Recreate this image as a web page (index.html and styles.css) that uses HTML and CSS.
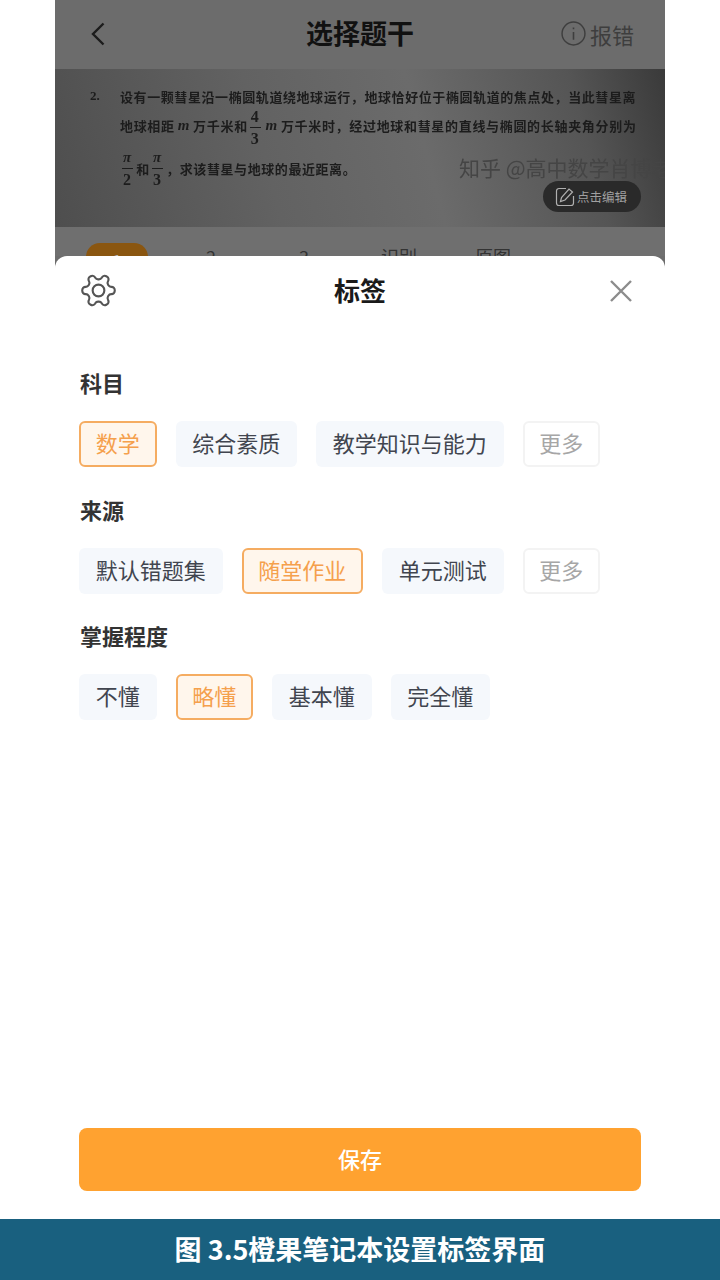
FILE: index.html
```html
<!DOCTYPE html>
<html lang="en">
<head>
    <meta charset="UTF-8">
    <meta name="viewport" content="width=device-width, initial-scale=1.0">
    <title>标签</title>
    <link rel="stylesheet" href="styles.css">
</head>
<body>

    <div class="page">
        <div class="screen">
            <!-- dimmed page behind the sheet -->
            <div class="topbar">
                <svg class="back-icon" viewBox="0 0 14 24" width="14" height="24"><path d="M12.5 1.5 2 12l10.5 10.5" fill="none" stroke="#1c1c1c" stroke-width="2.4"/></svg>
                <div class="topbar-title">选择题干</div>
                <div class="report">
                    <svg viewBox="0 0 24 24" width="25" height="25"><circle cx="12" cy="12" r="11" fill="none" stroke="#3e3e3e" stroke-width="1.4"/><path d="M12 10.5V18M12 6.2v1.8" stroke="#3e3e3e" stroke-width="1.5"/></svg>
                    <span>报错</span>
                </div>
            </div>

            <div class="photo">
                <div class="question">
                    <div class="q-num">2.</div>
                    <div class="q-body">
                        <div class="q-line q-line-1">设有一颗彗星沿一椭圆轨道绕地球运行，地球恰好位于椭圆轨道的焦点处，当此彗星离</div>
                        <div class="q-line q-line-2">地球相距 <i>m</i> 万千米和<span class="frac"><span>4</span><span>3</span></span><i>m</i> 万千米时，经过地球和彗星的直线与椭圆的长轴夹角分别为</div>
                        <div class="q-line q-line-3"><span class="frac"><span><i>π</i></span><span>2</span></span>和<span class="frac"><span><i>π</i></span><span>3</span></span>，求该彗星与地球的最近距离。</div>
                    </div>
                </div>
                <div class="watermark">知乎 @高中数学肖博老师</div>
                <div class="edit-pill">
                    <svg viewBox="0 0 20 20" width="20" height="20"><path d="M11 1.5H4a2.5 2.5 0 0 0-2.5 2.5v12A2.5 2.5 0 0 0 4 18.500h12a2.500 2.500 0 0 0 2.500-2.500V9" fill="none" stroke="#b0b0b0" stroke-width="1.2"/><path d="M5.500 14.500 6.500 10.500 14 2l3.500 3-7.500 8z" fill="none" stroke="#b0b0b0" stroke-width="1.2"/></svg>
                    <span>点击编辑</span>
                </div>
            </div>

            <div class="tabs">
                <div class="tab tab-active">1</div>
                <div class="tab tab-2">2</div>
                <div class="tab tab-3">3</div>
                <div class="tab tab-4">识别</div>
                <div class="tab tab-5">原图</div>
            </div>

            <!-- label sheet -->
            <div class="sheet">
                <div class="sheet-head">
                    <svg class="gear" viewBox="0 0 24 24" width="39" height="39"><g transform="rotate(90 12 12)" fill="none" stroke="#555" stroke-width="1.3"><path d="M12.22 2h-.44a2 2 0 0 0-2 2v.18a2 2 0 0 1-1 1.73l-.43.25a2 2 0 0 1-2 0l-.15-.08a2 2 0 0 0-2.73.73l-.22.38a2 2 0 0 0 .73 2.73l.15.1a2 2 0 0 1 1 1.72v.51a2 2 0 0 1-1 1.74l-.15.09a2 2 0 0 0-.73 2.73l.22.38a2 2 0 0 0 2.73.73l.15-.08a2 2 0 0 1 2 0l.43.25a2 2 0 0 1 1 1.73V20a2 2 0 0 0 2 2h.44a2 2 0 0 0 2-2v-.18a2 2 0 0 1 1-1.73l.43-.25a2 2 0 0 1 2 0l.15.08a2 2 0 0 0 2.73-.73l.22-.39a2 2 0 0 0-.73-2.73l-.15-.08a2 2 0 0 1-1-1.74v-.5a2 2 0 0 1 1-1.74l.15-.09a2 2 0 0 0 .73-2.73l-.22-.38a2 2 0 0 0-2.73-.73l-.15.08a2 2 0 0 1-2 0l-.43-.25a2 2 0 0 1-1-1.73V4a2 2 0 0 0-2-2z"/><circle cx="12" cy="12" r="3.6"/></g></svg>
                    <div class="sheet-title">标签</div>
                    <svg class="close" viewBox="0 0 24 24" width="24" height="24"><path d="M2 2l20 20M22 2 2 22" stroke="#8c8c8c" stroke-width="2.4"/></svg>
                </div>

                <div class="group">
                    <div class="group-title">科目</div>
                    <div class="chips">
                        <div class="chip selected">数学</div>
                        <div class="chip">综合素质</div>
                        <div class="chip">教学知识与能力</div>
                        <div class="chip more">更多</div>
                    </div>
                </div>

                <div class="group">
                    <div class="group-title">来源</div>
                    <div class="chips">
                        <div class="chip">默认错题集</div>
                        <div class="chip selected">随堂作业</div>
                        <div class="chip">单元测试</div>
                        <div class="chip more">更多</div>
                    </div>
                </div>

                <div class="group">
                    <div class="group-title">掌握程度</div>
                    <div class="chips">
                        <div class="chip">不懂</div>
                        <div class="chip selected">略懂</div>
                        <div class="chip">基本懂</div>
                        <div class="chip">完全懂</div>
                    </div>
                </div>

                <button class="save-btn">保存</button>
            </div>
        </div>

        <div class="caption">图 3.5橙果笔记本设置标签界面</div>
    </div>

</body>
</html>
```

FILE: styles.css
```css
body {
    margin: 0;
    background-color: white;
    font-family: "Noto Sans CJK SC", "Noto Sans", sans-serif;
}
.page {
    width: 720px;
    height: 1280px;
    display: flex;
    flex-direction: column;
    overflow: hidden;
}
.screen {
    flex: 1;
    min-height: 0;
    margin: 0 55px;
    display: flex;
    flex-direction: column;
    background-color: #6c6c6c;
}

/* top bar */
.topbar {
    height: 69px;
    flex: none;
    display: flex;
    align-items: center;
    position: relative;
    padding: 0 31px 2px 36px;
    box-sizing: border-box;
}
.topbar-title {
    position: absolute;
    left: 0;
    right: 0;
    top: 13px;
    text-align: center;
    font-size: 27px;
    line-height: 40px;
    font-weight: 700;
    color: #111;
}
.report {
    margin-left: auto;
    display: flex;
    align-items: center;
    gap: 4px;
    font-size: 22px;
    color: #3e3e3e;
}

/* blurred question photo */
.photo {
    height: 158px;
    flex: none;
    position: relative;
    overflow: hidden;
    background: linear-gradient(75deg, #4e4e4e 0%, #626262 35%, #6b6b6b 60%, #555 85%, #3a3a3a 100%);
}
.question {
    display: flex;
    padding: 15px 0 0 35px;
    font-weight: 700;
    font-size: 13px;
    color: #1c1c1c;
    filter: blur(0.5px);
}
.q-num {
    width: 30px;
    line-height: 24px;
    font-family: "Liberation Serif", serif;
}
.q-line {
    display: flex;
    align-items: center;
    white-space: nowrap;
    letter-spacing: 0.58px;
}
.q-line i {
    font-family: "Liberation Serif", serif;
    font-size: 15px;
    margin: 0 3px;
}
.q-line-1 {
    height: 24px;
}
.q-line-2 {
    height: 40px;
    margin-top: -3px;
    letter-spacing: 0.68px;
}
.q-line-2 .frac {
    margin-top: 4px;
}
.q-line-3 {
    height: 40px;
    margin-top: 3px;
}
.q-line-3 .frac {
    margin: 0 3.5px 0 2px;
}
.frac {
    display: inline-flex;
    flex-direction: column;
    align-items: center;
    margin: 0 2px;
    font-family: "Liberation Serif", serif;
    font-size: 16px;
    line-height: 21px;
}
.frac span:first-child {
    border-bottom: 1px solid #1c1c1c;
    padding: 0 1px;
}
.frac i {
    margin: 0;
}
.watermark {
    position: absolute;
    left: 404px;
    top: 83px;
    white-space: nowrap;
    font-size: 21px;
    line-height: 30px;
    color: #454545;
    filter: blur(0.5px);
}
.edit-pill {
    position: absolute;
    left: 488px;
    top: 112px;
    width: 98px;
    height: 31px;
    box-sizing: border-box;
    padding-left: 12px;
    display: flex;
    align-items: center;
    gap: 2px;
    border-radius: 16px;
    background-color: #2a2a2a;
    color: #a0a0a0;
    font-size: 12.5px;
}

/* tabs, mostly hidden by the sheet */
.tabs {
    height: 29px;
    flex: none;
    overflow: hidden;
    display: flex;
    align-items: flex-start;
    background-color: #6f6f6f;
    color: #333;
    font-size: 18px;
    line-height: 24px;
}
.tab {
    flex: none;
    width: 36px;
    margin-top: 17px;
    text-align: center;
}
.tab-active {
    width: 62px;
    height: 34px;
    margin-top: 16px;
    margin-left: 31px;
    border-radius: 14px;
    line-height: 34px;
    background-color: #8a5610;
    color: #bbb;
}
.tab-2 {
    margin-left: 45px;
}
.tab-3 {
    margin-left: 57px;
}
.tab-4 {
    margin-left: 59px;
}
.tab-5 {
    margin-left: 58px;
}

/* sheet */
.sheet {
    flex: 1;
    min-height: 0;
    display: flex;
    flex-direction: column;
    padding: 0 24px 28px 24px;
    border-radius: 12px 12px 0 0;
    background-color: white;
}
.sheet-head {
    height: 68px;
    flex: none;
    margin-bottom: 40px;
    position: relative;
    display: flex;
    align-items: center;
    justify-content: space-between;
    padding: 0 8px 0 0;
}
.close {
    margin-top: 2px;
}
.sheet-title {
    position: absolute;
    left: 0;
    right: 0;
    top: 14px;
    text-align: center;
    font-size: 26px;
    line-height: 40px;
    font-weight: 700;
    color: #1a1a1a;
}
.group {
    margin-bottom: 23.5px;
}
.group-title {
    padding-left: 1px;
    font-size: 22px;
    line-height: 36px;
    font-weight: 700;
    color: #333;
    margin-bottom: 21px;
}
.chips {
    display: flex;
    gap: 19px;
}
.chip {
    height: 46px;
    box-sizing: border-box;
    padding: 0 16.75px 4px;
    display: flex;
    align-items: center;
    border-radius: 6px;
    background-color: #f5f8fc;
    color: #41454f;
    font-size: 22px;
}
.chip.selected {
    padding: 0 14.75px 4px;
    border: 2px solid #f5ac61;
    background-color: #fff6ec;
    color: #f5a04c;
}
.chip.more {
    padding: 0 14.75px 4px;
    border: 2px solid #f3f3f3;
    background-color: white;
    color: #a6a6a6;
}
.save-btn {
    margin-top: auto;
    height: 63px;
    padding: 0 0 4px;
    border: none;
    border-radius: 8px;
    background-color: #ffa230;
    color: white;
    font-family: inherit;
    font-size: 22px;
    font-weight: 500;
    cursor: pointer;
}

/* figure caption */
.caption {
    height: 61px;
    flex: none;
    box-sizing: border-box;
    padding-bottom: 2px;
    display: flex;
    align-items: center;
    justify-content: center;
    background-color: #19607f;
    color: white;
    font-size: 27px;
    font-weight: 700;
}
```
